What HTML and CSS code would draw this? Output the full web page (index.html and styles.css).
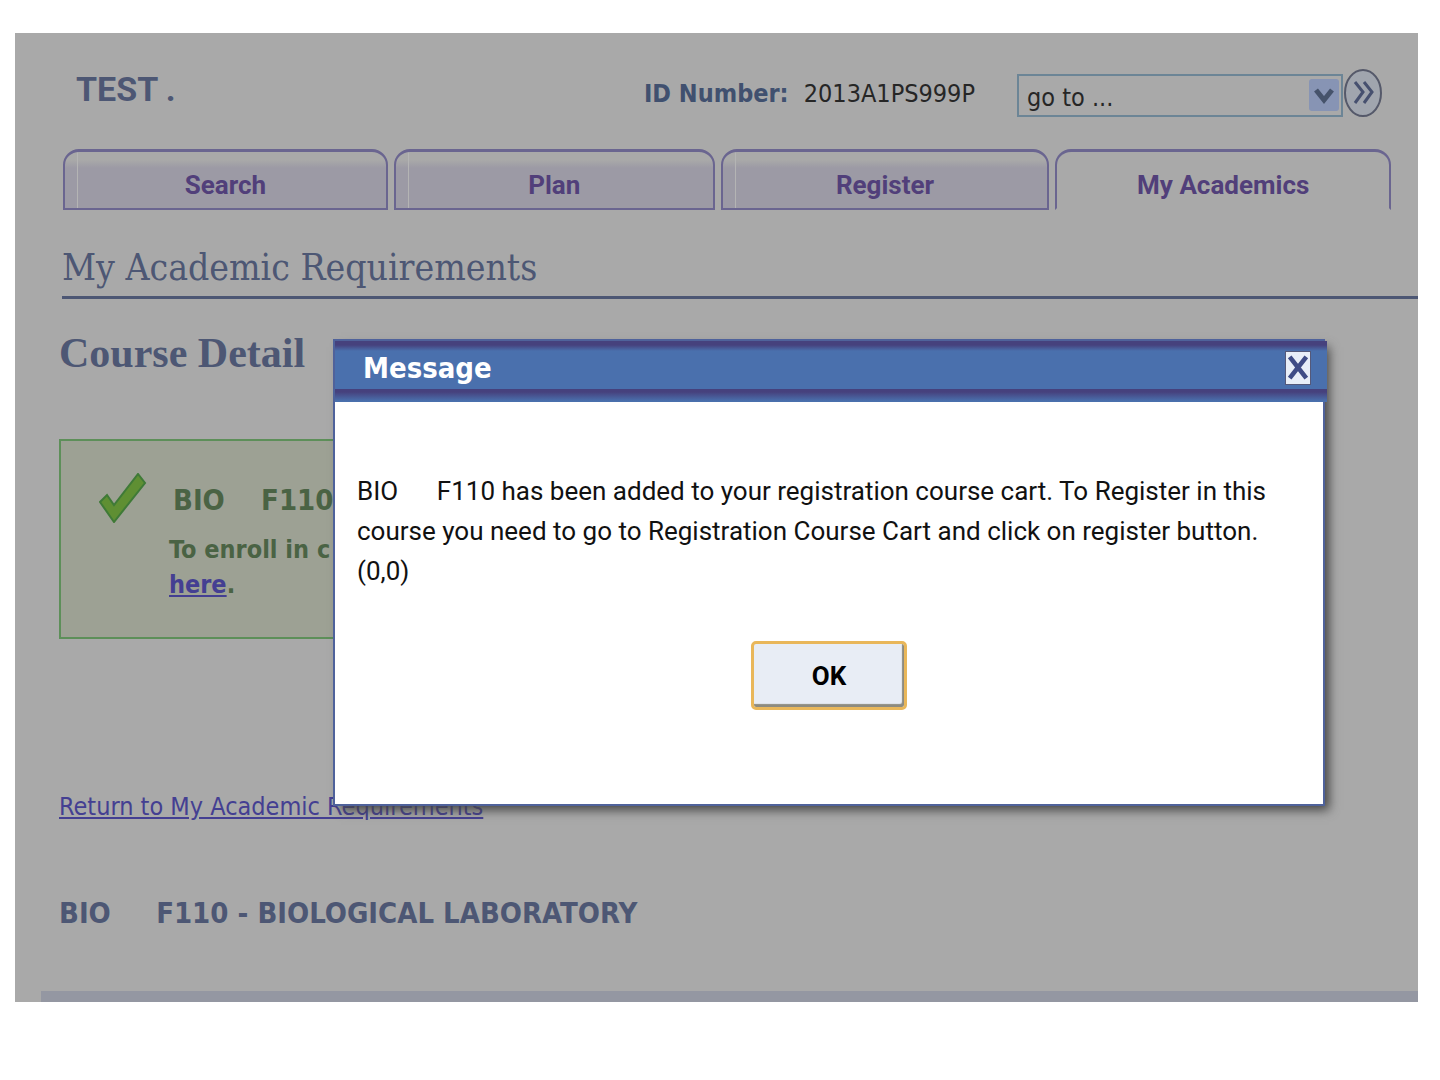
FILE: index.html
```html
<!DOCTYPE html>
<html lang="en">
<head>
  <meta charset="UTF-8" />
  <title>My Academic Requirements</title>
  <link rel="stylesheet" href="styles.css">
</head>
<body>

  <div class="page">
    <header class="top-bar">
      <div class="student-name">TEST .</div>
      <div class="student-id"><strong>ID Number:</strong> <span>2013A1PS999P</span></div>
      <form class="goto">
        <div class="select-wrap">
          <select id="goto" aria-label="Go to">
            <option>go to ...</option>
          </select>
          <svg class="select-arrow" viewBox="0 0 30 32" aria-hidden="true">
            <rect width="30" height="32" rx="3" fill="#8794b4" />
            <path d="M7 11l8 10 8-10" fill="none" stroke="#46536b" stroke-width="5" />
          </svg>
        </div>
        <button type="button" class="go-button" aria-label="Go">
          <svg viewBox="0 0 38 48">
            <ellipse cx="19" cy="24" rx="18" ry="23" fill="#a0a5ae" stroke="#55596a" stroke-width="2" />
            <path d="M11 13l8 10-8 11M20 13l8 10-8 11" fill="none" stroke="#46506f" stroke-width="3" />
          </svg>
        </button>
      </form>
    </header>

    <nav class="tabs">
      <a class="tab" href="#">Search</a>
      <a class="tab" href="#">Plan</a>
      <a class="tab" href="#">Register</a>
      <a class="tab active" href="#">My Academics</a>
    </nav>

    <h1>My Academic Requirements</h1>

    <main>
      <h2>Course Detail</h2>

      <div class="notice">
        <svg class="check" viewBox="0 0 48 50" aria-hidden="true">
          <path d="M1 29l7-7 7 10L39 1l7 9-31 39z" fill="#5f8f33" stroke="#3f7a37" stroke-width="2" />
        </svg>
        <div class="notice-text">
          <p class="course">BIO    F110</p>
          <p>To enroll in c</p>
          <p><a href="#">here</a>.</p>
        </div>
      </div>

      <p class="return"><a href="#">Return to My Academic Requirements</a></p>

      <h3>BIO     F110 - BIOLOGICAL LABORATORY</h3>
    </main>
    <div class="section-bar"></div>

    <div class="modal" role="dialog" aria-labelledby="modal-title">
      <div class="modal-header">
        <span id="modal-title">Message</span>
        <button type="button" class="close" aria-label="Close">
          <svg viewBox="0 0 26 34">
            <path d="M4 5l18 23M22 5L4 28" fill="none" stroke="#3f4c86" stroke-width="5" />
          </svg>
        </button>
      </div>
      <div class="modal-body">
        <p>BIO      F110 has been added to your registration course cart. To Register in this course you need to go to Registration Course Cart and click on register button. (0,0)</p>
        <button type="button" class="ok">OK</button>
      </div>
    </div>
  </div>

</body>
</html>
```

FILE: styles.css
```css
* {
  box-sizing: border-box;
}
body {
  margin: 33px 22px 0 15px;
  background-color: #fff;
  font-family: "DejaVu Sans Condensed", "DejaVu Sans", sans-serif;
  font-size: 25px;
}
h1, h2, h3, p {
  margin: 0;
}
.page {
  position: relative;
  overflow: hidden;
  background-color: #a9a9a9;
}
.top-bar {
  display: flex;
  align-items: center;
  height: 116px;
  padding: 4px 36px 0 61px;
}
.student-name {
  flex: 1;
  padding-bottom: 8px;
  font-family: Roboto, sans-serif;
  font-size: 34px;
  font-weight: bold;
  color: #4d5774;
}
.student-id {
  margin-right: 42px;
  color: #262626;
}
.student-id strong {
  margin-right: 8px;
  color: #40506f;
}
.goto {
  display: flex;
  align-items: center;
  gap: 1px;
}
.select-wrap {
  position: relative;
  padding-top: 4px;
}
.select-wrap select {
  display: block;
  appearance: none;
  width: 326px;
  height: 43px;
  padding: 4px 8px 0;
  border: 2px solid #6c8596;
  border-radius: 0;
  background-color: #a9a9a9;
  color: #262626;
  font: inherit;
}
.select-arrow {
  position: absolute;
  top: 9px;
  right: 4px;
  width: 30px;
  height: 32px;
  pointer-events: none;
}
.go-button {
  width: 38px;
  height: 48px;
  padding: 0;
  border: none;
  background: none;
}
.go-button svg, .close svg {
  display: block;
  width: 100%;
  height: 100%;
}
.tabs {
  display: grid;
  grid-template-columns: 330fr 326fr 334fr 341fr;
  column-gap: 6px;
  margin: 0 27px 0 48px;
}
.tab {
  height: 61px;
  padding-top: 6px;
  border: 2px solid #6a6590;
  border-top-width: 3px;
  border-radius: 16px 16px 0 0;
  background: linear-gradient(to right, transparent 12px, #b4b4b4 12px, #b4b4b4 13px, transparent 13px), linear-gradient(#a9a9a9 8px, #9c9aa5 16px);
  color: #513f7a;
  font-family: Roboto, sans-serif;
  font-size: 26px;
  font-weight: bold;
  line-height: 54px;
  text-align: center;
  text-decoration: none;
}
.tab.active {
  background: none;
  border-bottom-color: transparent;
}
h1 {
  margin: 34px 0 0 47px;
  padding-bottom: 4px;
  border-bottom: 3px solid #4d5774;
  color: #4d5774;
  font-family: "DejaVu Serif Condensed", "DejaVu Serif", serif;
  font-size: 37px;
  font-weight: normal;
  line-height: 48px;
}
main {
  padding: 28px 44px 0;
}
h2 {
  color: #4d5774;
  font-family: "Liberation Serif", serif;
  font-size: 42px;
  line-height: 52px;
}
/* ends underneath the message box */
.notice {
  display: flex;
  gap: 22px;
  width: 75%;
  height: 200px;
  margin-top: 60px;
  padding: 32px 38px;
  border: 2px solid #5d8f59;
  background-color: #9da194;
  color: #4a6344;
  font-weight: bold;
}
.check {
  width: 48px;
  height: 50px;
}
.notice-text {
  line-height: 35px;
}
.course, h3, .modal-body p {
  white-space: pre-wrap;
}
.course, h3 {
  font-size: 29px;
}
.course {
  margin: 10px 4px 14px;
}
a {
  color: #443f92;
}
.return {
  margin-top: 150px;
  line-height: 36px;
}
h3 {
  margin-top: 70px;
  color: #4d5774;
  line-height: 36px;
}
.section-bar {
  height: 11px;
  margin: 60px 0 0 26px;
  background-color: #9497a2;
}
.modal {
  position: absolute;
  top: 306px;
  left: 318px;
  right: 93px;
  background-color: #fff;
  border: 2px solid #4f629b;
  box-shadow: 6px 6px 10px -2px #444;
}
.modal-header {
  display: flex;
  align-items: center;
  justify-content: space-between;
  height: 61px;
  margin-right: -4px;
  padding: 0 16px 8px 28px;
  background: linear-gradient(#46417d 4px, #4a70ad 10px, #4a70ad 48px, #46417d 48px, #46417d 51px, #4a70ad 60px);
  color: #fff;
  font-weight: bold;
  font-size: 29px;
}
.close {
  width: 26px;
  height: 34px;
  padding: 0;
  border: 1px solid #55597a;
  background-color: #e8eef8;
}
.modal-body {
  height: 402px;
  padding: 69px 22px 0;
  color: #111;
  font-family: Roboto, sans-serif;
  font-size: 26px;
  line-height: 40px;
}
.ok {
  display: block;
  width: 156px;
  height: 69px;
  margin: 50px auto 0;
  border: 3px solid #e9b75a;
  border-radius: 5px;
  background-color: #e8edf5;
  box-shadow: inset -2px -3px 1px #8d8b80;
  font: inherit;
  font-weight: bold;
}
```
